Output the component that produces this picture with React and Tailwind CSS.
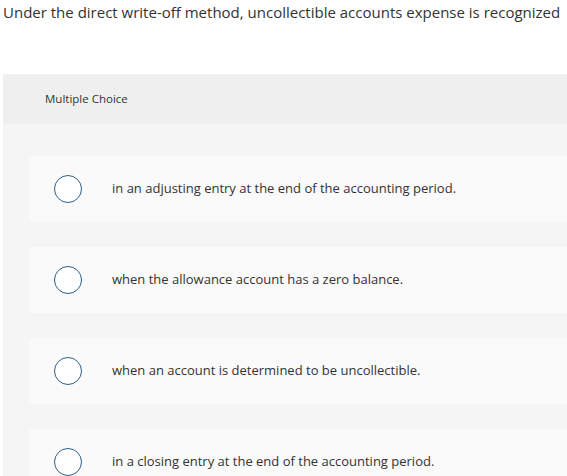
const options = [
  'in an adjusting entry at the end of the accounting period.',
  'when the allowance account has a zero balance.',
  'when an account is determined to be uncollectible.',
  'in a closing entry at the end of the accounting period.',
];

export default function App() {
  return (
    <div
      className="w-[567px] h-[476px] overflow-hidden bg-white text-[#333]"
      style={{ fontFamily: '"Open Sans", sans-serif' }}
    >
      <p className="pl-[3px] pt-[2px] text-[15px] leading-[20px] whitespace-nowrap">
        Under the direct write-off method, uncollectible accounts expense is recognized
      </p>

      <div className="ml-[3px] mt-[52px] w-[600px]">
        <div className="h-[50px] bg-[#efefef] flex items-center pl-[42px] text-[11.5px]">
          Multiple Choice
        </div>
        <div className="bg-[#f5f5f5] pt-[32px] pl-[26px] flex flex-col gap-[25px] pb-10">
          {options.map((opt) => (
            <div
              key={opt}
              className="h-[66px] bg-[#fafafa] rounded-[3px] flex items-center"
            >
              <span className="ml-[25px] w-[28px] h-[28px] rounded-full border-[1.5px] border-[#2d5f8c] bg-white shrink-0" />
              <span className="ml-[30px] text-[13px] whitespace-nowrap">{opt}</span>
            </div>
          ))}
        </div>
      </div>
    </div>
  );
}
